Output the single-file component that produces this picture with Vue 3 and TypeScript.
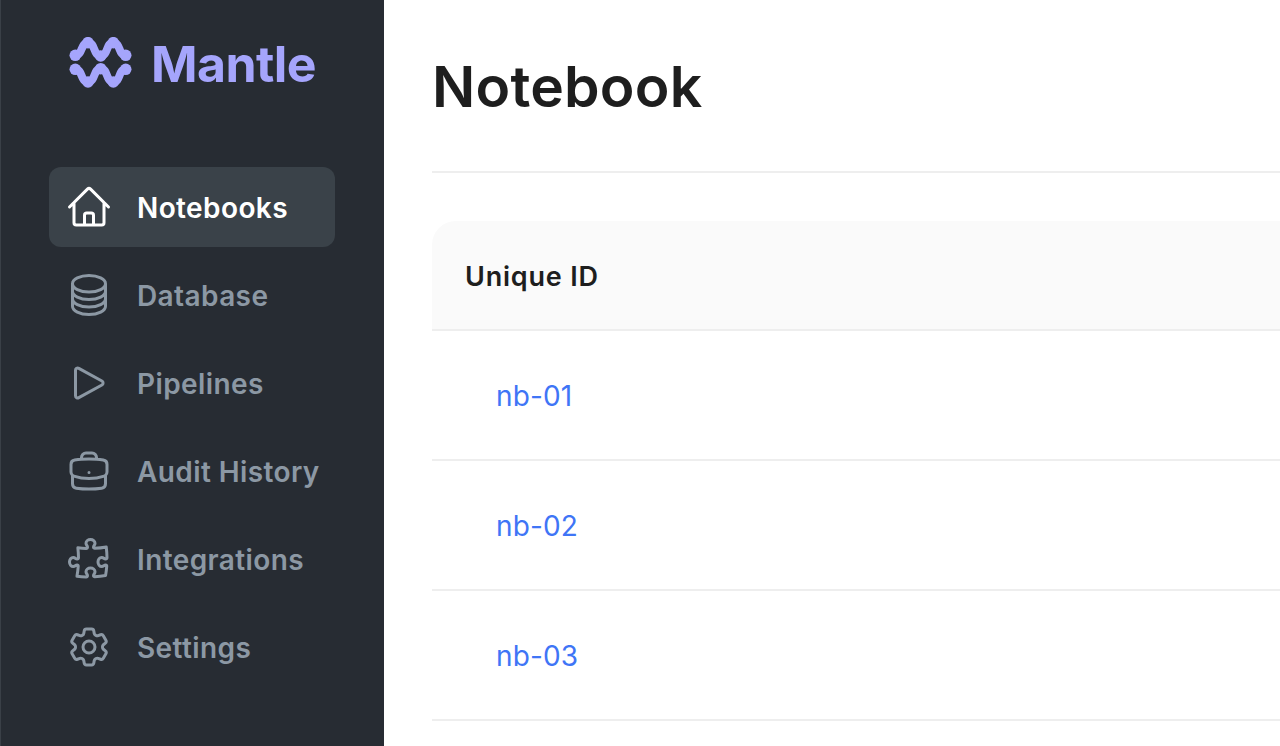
<script setup lang="ts">
const nav = [
  { label: 'Notebooks', active: true, d: 'M2.25 12l8.954-8.955c.44-.439 1.152-.439 1.591 0L21.75 12M4.5 9.75v10.125c0 .621.504 1.125 1.125 1.125H9.75v-4.875c0-.621.504-1.125 1.125-1.125h2.25c.621 0 1.125.504 1.125 1.125V21h4.125c.621 0 1.125-.504 1.125-1.125V9.75M8.25 21h8.25' },
  { label: 'Database', active: false, d: 'M20.25 6.375c0 2.278-3.694 4.125-8.25 4.125S3.75 8.653 3.75 6.375m16.5 0c0-2.278-3.694-4.125-8.25-4.125S3.75 4.097 3.75 6.375m16.5 0v11.25c0 2.278-3.694 4.125-8.25 4.125s-8.25-1.847-8.25-4.125V6.375m16.5 0v3.75m-16.5-3.75v3.75m16.5 0v3.75C20.25 16.153 16.556 18 12 18s-8.25-1.847-8.25-4.125v-3.75m16.5 0c0 2.278-3.694 4.125-8.25 4.125s-8.25-1.847-8.25-4.125' },
  { label: 'Pipelines', active: false, d: 'M5.25 5.653c0-.856.917-1.398 1.667-.986l11.54 6.348a1.125 1.125 0 010 1.971l-11.54 6.347a1.125 1.125 0 01-1.667-.985V5.653z' },
  { label: 'Audit History', active: false, d: 'M20.25 14.15v4.25c0 1.094-.787 2.036-1.872 2.18-2.087.277-4.216.42-6.378.42s-4.291-.143-6.378-.42c-1.085-.144-1.872-1.086-1.872-2.18v-4.25m16.5 0a2.18 2.18 0 00.75-1.661V8.706c0-1.081-.768-2.015-1.837-2.175a48.114 48.114 0 00-3.413-.387m4.5 8.006c-.194.165-.42.295-.673.38A23.978 23.978 0 0112 15.75c-2.648 0-5.195-.429-7.577-1.22a2.016 2.016 0 01-.673-.38m0 0A2.18 2.18 0 013 12.489V8.706c0-1.081.768-2.015 1.837-2.175a48.111 48.111 0 013.413-.387m7.5 0V5.25A2.25 2.25 0 0013.5 3h-3a2.25 2.25 0 00-2.25 2.25v.894m7.5 0a48.667 48.667 0 00-7.5 0M12 12.75h.008v.008H12v-.008z' },
  { label: 'Integrations', active: false, d: 'M14.25 6.087c0-.355.186-.676.401-.959.221-.29.349-.634.349-1.003 0-1.036-1.007-1.875-2.25-1.875s-2.25.84-2.25 1.875c0 .369.128.713.349 1.003.215.283.401.604.401.959v0a.64.64 0 01-.657.643 48.39 48.39 0 01-4.163-.3c.186 1.613.293 3.25.315 4.907a.656.656 0 01-.658.663v0c-.355 0-.676-.186-.959-.401a1.647 1.647 0 00-1.003-.349c-1.036 0-1.875 1.007-1.875 2.25s.84 2.25 1.875 2.25c.369 0 .713-.128 1.003-.349.283-.215.604-.401.959-.401v0c.31 0 .555.26.532.57a48.039 48.039 0 01-.642 5.056c1.518.19 3.058.309 4.616.354a.64.64 0 00.657-.643v0c0-.355-.186-.676-.401-.959a1.647 1.647 0 01-.349-1.003c0-1.035 1.008-1.875 2.25-1.875 1.243 0 2.25.84 2.25 1.875 0 .369-.128.713-.349 1.003-.215.283-.4.604-.4.959v0c0 .333.277.599.61.58a48.1 48.1 0 005.427-.63 48.05 48.05 0 00.582-4.717.532.532 0 00-.533-.57v0c-.355 0-.676.186-.959.401-.29.221-.634.349-1.003.349-1.035 0-1.875-1.007-1.875-2.25s.84-2.25 1.875-2.25c.37 0 .713.128 1.003.349.283.215.604.401.96.401v0a.656.656 0 00.658-.663 48.422 48.422 0 00-.37-5.36c-1.886.342-3.81.574-5.766.689a.578.578 0 01-.61-.58v0z' },
  { label: 'Settings', active: false, d: 'M9.594 3.94c.09-.542.56-.94 1.11-.94h2.593c.55 0 1.02.398 1.11.94l.213 1.281c.063.374.313.686.645.87.074.04.147.083.22.127.324.196.72.257 1.075.124l1.217-.456a1.125 1.125 0 011.37.49l1.296 2.247a1.125 1.125 0 01-.26 1.431l-1.003.827c-.293.24-.438.613-.431.992a6.759 6.759 0 010 .255c-.007.378.138.75.43.99l1.005.828c.424.35.534.954.26 1.43l-1.298 2.247a1.125 1.125 0 01-1.369.491l-1.217-.456c-.355-.133-.75-.072-1.076.124a6.57 6.57 0 01-.22.128c-.331.183-.581.495-.644.869l-.213 1.28c-.09.543-.56.941-1.11.941h-2.594c-.55 0-1.02-.398-1.11-.94l-.213-1.281c-.062-.374-.312-.686-.644-.87a6.52 6.52 0 01-.22-.127c-.325-.196-.72-.257-1.076-.124l-1.217.456a1.125 1.125 0 01-1.369-.49l-1.297-2.247a1.125 1.125 0 01.26-1.431l1.004-.827c.292-.24.437-.613.43-.992a6.932 6.932 0 010-.255c.007-.378-.138-.75-.43-.99l-1.004-.828a1.125 1.125 0 01-.26-1.43l1.297-2.247a1.125 1.125 0 011.37-.491l1.216.456c.356.133.751.072 1.076-.124.072-.044.146-.087.22-.128.332-.183.582-.495.644-.869l.214-1.281zM15 12a3 3 0 11-6 0 3 3 0 016 0z' },
]
const rows = ['nb-01', 'nb-02', 'nb-03']
const logoNodes = [
  [6.3, 18.3], [19, 5.7], [31.7, 19], [44.3, 5.7], [56.7, 18.3],
  [6.3, 32.3], [19, 45], [31.7, 31.7], [44.3, 45], [56.7, 32.3],
]
</script>

<template>
  <div class="page">
    <aside class="sidebar">
      <div class="brand">
        <svg class="logo" width="64" height="52" viewBox="0 0 64 52" fill="none" stroke="#a5a5fc" stroke-width="8" stroke-linecap="round" stroke-linejoin="round">
          <path d="M6.300 18.300 C13.900 18.300 11.400 5.700 19 5.700 C26.600 5.700 24.100 19 31.700 19 C39.300 19 36.700 5.700 44.300 5.700 C51.900 5.700 49.100 18.300 56.700 18.300" />
          <path d="M6.300 32.300 C13.900 32.300 11.400 45 19 45 C26.600 45 24.100 31.700 31.700 31.700 C39.300 31.700 36.700 45 44.300 45 C51.900 45 49.100 32.300 56.700 32.300" />
          <circle v-for="n in logoNodes" :key="n.join()" :cx="n[0]" :cy="n[1]" r="5.800" fill="#a5a5fc" stroke="none" />
        </svg>
        <span class="brand-name">Mantle</span>
      </div>
      <nav class="nav">
        <a v-for="item in nav" :key="item.label" class="nav-item" :class="{ active: item.active }">
          <svg class="icon" width="48" height="48" viewBox="0 0 24 24" fill="none" stroke="currentColor" stroke-width="1.5" stroke-linecap="round" stroke-linejoin="round">
            <path :d="item.d" />
          </svg>
          <span class="nav-label">{{ item.label }}</span>
        </a>
      </nav>
    </aside>
    <main class="main">
      <h1 class="title">Notebook</h1>
      <div class="table">
        <div class="head"><span class="nudge">Unique ID</span></div>
        <div v-for="row in rows" :key="row" class="row"><a class="link nudge">{{ row }}</a></div>
      </div>
    </main>
  </div>
</template>

<style>
html, body { margin: 0; height: 100%; overflow: hidden; background: #fff; }
</style>

<style scoped>
.page {
  display: flex;
  height: 746px;
  overflow: hidden;
  font-family: Inter, "Liberation Sans", sans-serif;
}
.sidebar {
  box-sizing: border-box;
  width: 384px;
  flex: none;
  background: #272c33;
  border-left: 1px solid #3a4047;
  padding: 0 49px 0 48px;
  display: flex;
  flex-direction: column;
}
.brand {
  height: 167px;
  display: flex;
  align-items: flex-start;
  padding-top: 37px;
  padding-left: 20px;
  box-sizing: border-box;
  color: #a5a5fc;
}
.logo { flex: none; }
.brand-name {
  margin-left: 18px;
  font-size: 50px;
  line-height: 54px;
  font-weight: 700;
  letter-spacing: -0.6px;
}
.nav { display: flex; flex-direction: column; gap: 8px; }
.nav-item {
  height: 80px;
  border-radius: 12px;
  display: flex;
  align-items: center;
  gap: 24px;
  padding-left: 16px;
  color: #8c98a4;
  font-size: 28px;
  font-weight: 600;
  letter-spacing: 0.4px;
  white-space: nowrap;
}
.nav-label { padding-top: 2px; }
.nav-item.active { background: #3a4249; color: #fff; }
.icon { flex: none; }
.main {
  flex: 1;
  min-width: 0;
  padding-left: 48px;
  color: #1e1e1e;
}
.title {
  margin: 0;
  height: 173px;
  box-sizing: border-box;
  padding-top: 53px;
  font-size: 57px;
  line-height: 68px;
  font-weight: 600;
  letter-spacing: 0.2px;
  border-bottom: 2px solid #eeeeee;
}
.table { margin-top: 48px; }
.head {
  height: 110px;
  box-sizing: border-box;
  border-top-left-radius: 24px;
  background: #fafafa;
  border-bottom: 2px solid #eeeeee;
  padding-left: 33px;
  display: flex;
  align-items: center;
  font-size: 27px;
  font-weight: 600;
  letter-spacing: 0.8px;
}
.nudge { padding-top: 2px; }
.row {
  height: 130px;
  box-sizing: border-box;
  border-bottom: 2px solid #eeeeee;
  padding-left: 64px;
  display: flex;
  align-items: center;
}
.link {
  color: #3f75f6;
  font-size: 28px;
  letter-spacing: 0.15px;
}
</style>
